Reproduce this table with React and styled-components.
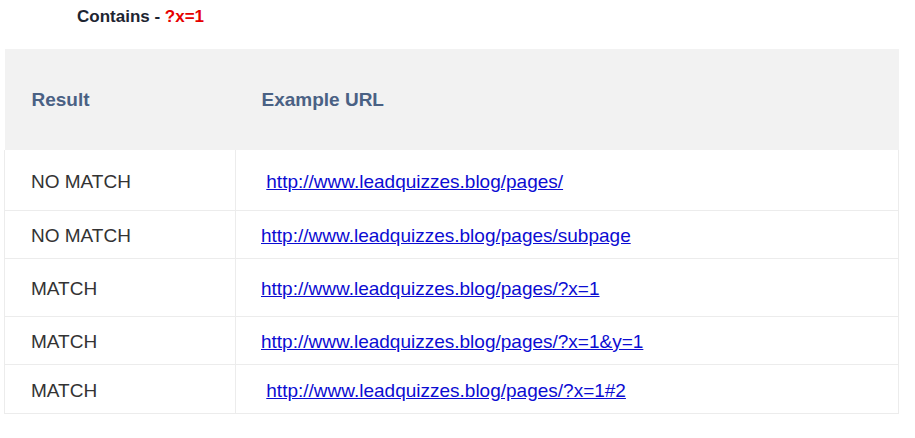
import React from 'react'
import styled, { createGlobalStyle } from 'styled-components'

const GlobalStyle = createGlobalStyle`
  body {
    margin: 0;
    background: #ffffff;
    font-family: "Liberation Sans", Arial, sans-serif;
  }
`

const Page = styled.div`
  width: 915px;
  height: 438px;
  overflow: hidden;
`

const Title = styled.h4`
  margin: 0;
  padding: 7px 0 0 77px;
  height: 49px;
  box-sizing: border-box;
  font-size: 17px;
  font-weight: 700;
  line-height: 20px;
  color: #1d2431;
`

const Pattern = styled.span`
  color: #e60000;
`

const Table = styled.table`
  margin-left: 4px;
  width: 895px;
  border-collapse: collapse;
  table-layout: fixed;
  font-size: 19px;
`

const HeadCell = styled.th`
  height: 101px;
  padding: 0 0 0 ${props => props.inset}px;
  background: #f2f2f2;
  text-align: left;
  font-weight: 700;
  color: #4a6184;
  width: ${props => props.width || 'auto'};
`

const Row = styled.tr`
  height: ${props => props.height}px;
  border-bottom: 1px solid #ececec;
`

const Cell = styled.td`
  padding: 4px 0 0 ${props => props.inset}px;
  color: #333333;
  border-left: 1px solid #ececec;
  border-right: 1px solid #ececec;
  white-space: pre;
`

const Link = styled.a`
  color: #0c0cd2;
  text-decoration: underline;
`

const rows = [
  { result: 'NO MATCH', url: ' http://www.leadquizzes.blog/pages/', height: 60 },
  { result: 'NO MATCH', url: 'http://www.leadquizzes.blog/pages/subpage', height: 48 },
  { result: 'MATCH', url: 'http://www.leadquizzes.blog/pages/?x=1', height: 58 },
  { result: 'MATCH', url: 'http://www.leadquizzes.blog/pages/?x=1&y=1', height: 48 },
  { result: 'MATCH', url: ' http://www.leadquizzes.blog/pages/?x=1#2', height: 49 }
]

export default function App () {
  return (
    <Page>
      <GlobalStyle />
      <Title>Contains - <Pattern>?x=1</Pattern></Title>
      <Table>
        <thead>
          <tr>
            <HeadCell inset={27} width='204px'>Result</HeadCell>
            <HeadCell inset={26}>Example URL</HeadCell>
          </tr>
        </thead>
        <tbody>
          { rows.map((row, i) =>
              <Row key={i} height={row.height}>
                <Cell inset={26}>{row.result}</Cell>
                <Cell inset={25}>
                  {row.url.startsWith(' ') && ' '}
                  <Link href='#'>{row.url.trim()}</Link>
                </Cell>
              </Row>
            )
          }
        </tbody>
      </Table>
    </Page>
  )
}
